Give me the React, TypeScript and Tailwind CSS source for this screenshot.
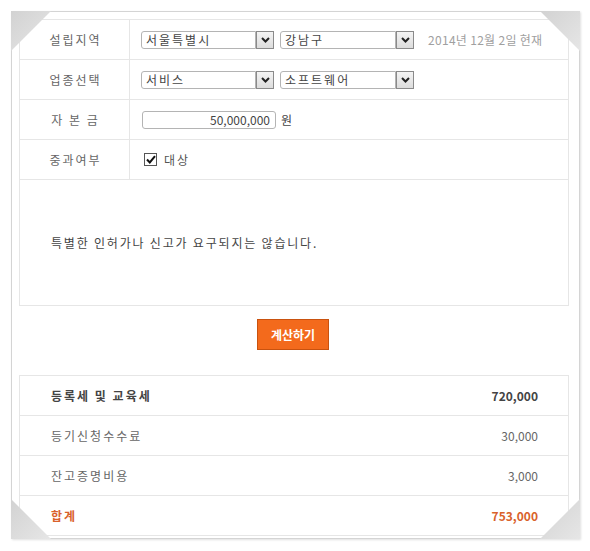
import React from "react";

function Corner({ pos }: { pos: "tl" | "tr" | "bl" | "br" }) {
  const place = {
    tl: "left-[-1px] top-[-1px]",
    tr: "right-[-1px] top-[-1px]",
    bl: "left-[-1px] bottom-[-1px]",
    br: "right-[-1px] bottom-[-1px]",
  }[pos];
  const pts = {
    tl: "0,0 40,0 0,40",
    tr: "0,0 40,0 40,40",
    bl: "0,0 0,40 40,40",
    br: "40,0 40,40 0,40",
  }[pos];
  return (
    <svg className={`absolute ${place}`} width="40" height="40" viewBox="0 0 40 40">
      <defs>
        <linearGradient id={`g-${pos}`} x1="0" y1="0" x2="1" y2="1">
          <stop offset="0" stopColor="#d2d2d2" />
          <stop offset="1" stopColor="#e6e6e6" />
        </linearGradient>
      </defs>
      <polygon points={pts} fill={`url(#g-${pos})`} />
    </svg>
  );
}

function Select({ value, width }: { value: string; width: string }) {
  return (
    <div className={`flex h-[18px] ${width}`}>
      <div className="flex-1 rounded-l-[3px] border border-[#b4b4b4] pl-[4px] text-[12px] leading-[16px] tracking-[2px] text-[#444]">
        {value}
      </div>
      <div className="flex w-[18px] items-center justify-center border border-[#8a8a8a] bg-gradient-to-b from-[#f4f4f4] to-[#dcdcdc]">
        <svg width="9" height="6" viewBox="0 0 9 6">
          <path d="M1 1 L4.5 4.5 L8 1" fill="none" stroke="#222" strokeWidth="2" />
        </svg>
      </div>
    </div>
  );
}

function FormRow({ label, children }: { label: string; children: React.ReactNode }) {
  return (
    <div className="flex h-[40px] border-b border-[#e6e6e6]">
      <div className="flex w-[110px] items-center justify-center border-r border-[#e6e6e6] pl-[2px] text-[12px] tracking-[2px] text-[#666]">
        {label}
      </div>
      <div className="flex flex-1 items-center pl-[11px]">{children}</div>
    </div>
  );
}

function ResultRow({
  label,
  value,
  tone = "plain",
}: {
  label: string;
  value: string;
  tone?: "plain" | "bold" | "total";
}) {
  const cls =
    tone === "bold"
      ? "font-bold text-[#444]"
      : tone === "total"
      ? "font-bold text-[#d9622b]"
      : "text-[#666]";
  return (
    <div className={`flex h-[40px] items-center justify-between border-b border-[#e6e6e6] pl-[31px] pr-[30px] text-[12px] ${cls}`}>
      <span className="tracking-[2px]">{label}</span>
      <span>{value}</span>
    </div>
  );
}

export default function App() {
  return (
    <div className="h-[551px] w-[590px] bg-white pl-[11px] pt-[11px] font-['Noto_Sans_CJK_KR',sans-serif]">
      <div className="relative h-[528px] w-[569px] border border-[#d4d4d4] pl-[7px] pr-[10px] pt-[7px] shadow-[1px_1px_2px_rgba(0,0,0,0.12)]">
        <div className="border-x border-t border-[#e6e6e6]">
          <FormRow label="설립지역">
            <Select value="서울특별시" width="w-[133px]" />
            <div className="w-[6px]" />
            <Select value="강남구" width="w-[134px]" />
            <span className="ml-[14px] text-[12px] tracking-[0.3px] text-[#a0a0a0]">2014년 12월 2일 현재</span>
          </FormRow>
          <FormRow label="업종선택">
            <Select value="서비스" width="w-[133px]" />
            <div className="w-[6px]" />
            <Select value="소프트웨어" width="w-[134px]" />
          </FormRow>
          <FormRow label="자 본 금">
            <div className="ml-[1px] h-[18px] w-[134px] rounded-[3px] border border-[#b4b4b4] pr-[5px] text-right text-[12px] leading-[16px] text-[#444]">
              50,000,000
            </div>
            <span className="ml-[5px] text-[12px] text-[#444]">원</span>
          </FormRow>
          <FormRow label="중과여부">
            <div className="ml-[3px] flex h-[13px] w-[13px] items-center justify-center border border-[#555] bg-white">
              <svg width="10" height="9" viewBox="0 0 10 9">
                <path d="M1 4.5 L3.8 7.5 L9 1.2" fill="none" stroke="#111" strokeWidth="2" />
              </svg>
            </div>
            <span className="ml-[7px] text-[12px] tracking-[2px] text-[#555]">대상</span>
          </FormRow>
          <div className="flex h-[126px] items-center border-b border-[#e6e6e6] pl-[31px] text-[12px] tracking-[1.8px] text-[#444]">
            특별한 인허가나 신고가 요구되지는 않습니다.
          </div>
        </div>

        <div className="flex justify-center pb-[25px] pt-[13px]">
          <button className="ml-[-2px] h-[31px] w-[72px] border border-[#c9520f] bg-[#f36a1c] text-[12px] font-bold text-white">
            계산하기
          </button>
        </div>

        <div className="border-x border-t border-[#e6e6e6]">
          <ResultRow label="등록세 및 교육세" value="720,000" tone="bold" />
          <ResultRow label="등기신청수수료" value="30,000" />
          <ResultRow label="잔고증명비용" value="3,000" />
          <ResultRow label="합계" value="753,000" tone="total" />
        </div>

        <Corner pos="tl" />
        <Corner pos="tr" />
        <Corner pos="bl" />
        <Corner pos="br" />
      </div>
    </div>
  );
}
